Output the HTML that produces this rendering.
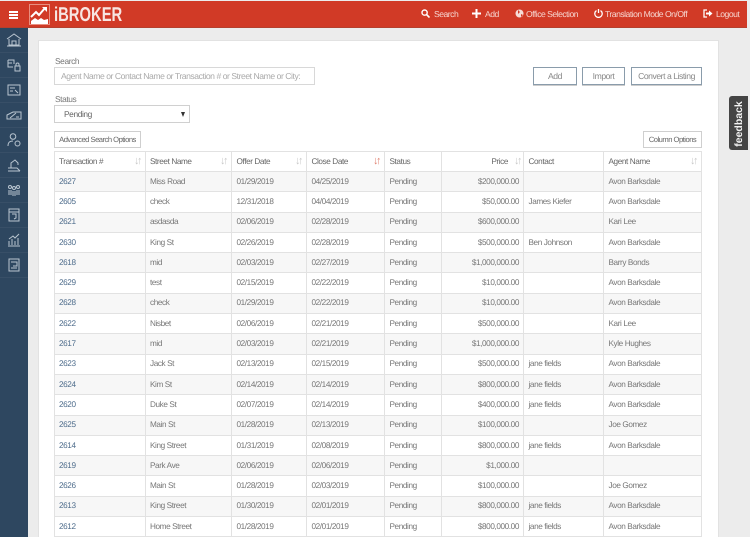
<!DOCTYPE html>
<html><head><meta charset="utf-8"><style>
*{box-sizing:border-box}
html,body{margin:0;padding:0}
body{width:750px;height:537px;overflow:hidden;position:relative;background:#ececec;font-family:"Liberation Sans",sans-serif;font-size:8.4px;letter-spacing:-.4px;color:#777;text-rendering:geometricPrecision}
.a{position:absolute;white-space:nowrap}
#top{left:0;top:1px;width:747px;height:27px;background:#d13a26;border-bottom:1px solid #b5402e}
#side{left:0;top:28px;width:28px;height:509px;background:#2e4760}
#side i{position:absolute;left:0;width:28px;height:1px;background:#384f67}
#side svg{position:absolute;left:6px;width:16px;height:16px;fill:none;stroke:#b9c5d0;stroke-width:1}
#card{left:38px;top:40px;width:681px;height:497px;background:#fff;border:1px solid #e2e2e2;border-bottom:0}
.nav{color:#f6d5cf;font-size:8.6px;letter-spacing:-.5px;top:9px}
.btn{border:1px solid #8a9cab;background:#fff;color:#888;text-align:center;height:18px;line-height:16px;font-size:8.6px;letter-spacing:-.45px;box-shadow:0 1px 0 #ccc}
.btn2{border:1px solid #cfcfcf;background:#fff;color:#666;text-align:center;height:17px;line-height:15px;font-size:7.6px;letter-spacing:-.5px}
table{position:absolute;left:54px;top:151px;width:647px;border-collapse:collapse;table-layout:fixed;font-size:8.2px;letter-spacing:-.4px;background:#fff}
td,th{border:1px solid #e2e2e2;padding:0 4px 1px;height:20.3px;font-weight:normal;text-align:left;color:#777;white-space:nowrap;overflow:hidden;position:relative}
td:nth-child(n+3),th:nth-child(n+3){padding-left:4.5px}
th{height:20px;color:#666;font-size:8.2px}
tr:nth-child(odd) td{background:#f7f7f7}
td:first-child{color:#4f6d8c}
.r{text-align:right}
.s{position:absolute;right:5px;top:3px;font-size:11px;color:#c8c8c8;letter-spacing:-2.5px}
</style></head><body>
<div class="a" id="top"></div>
<div class="a" style="left:9px;top:11px;width:9px;height:2px;background:#fff"></div>
<div class="a" style="left:9px;top:14px;width:9px;height:2px;background:#fff"></div>
<div class="a" style="left:9px;top:17px;width:9px;height:2px;background:#fff"></div>
<svg class="a" style="left:29px;top:4px" width="21" height="21" viewBox="0 0 21 21"><rect x=".5" y=".5" width="20" height="20" fill="none" stroke="#e88f80"/><path d="M2 13L7 8l3 3 6-7" fill="none" stroke="#fff" stroke-width="2"/><path d="M13 3h5v5z" fill="#fff"/><path d="M2 20v-3l4-3 3 2 3-2 3 2 4-1v5z" fill="#fff"/></svg>
<div class="a" style="left:54px;top:5px;font-size:20px;line-height:20px;letter-spacing:0;font-weight:bold;color:#f7e6e2;transform:scaleX(.74);transform-origin:0 0">iBROKER</div>

<svg class="a" style="left:421px;top:9px" width="9" height="9" viewBox="0 0 9 9"><circle cx="3.6" cy="3.6" r="2.6" fill="none" stroke="#fff" stroke-width="1.4"/><path d="M5.500 5.500L8.500 8.500" stroke="#fff" stroke-width="1.600"/></svg>
<div class="a nav" style="left:434px">Search</div>
<svg class="a" style="left:472px;top:9px" width="9" height="9" viewBox="0 0 9 9"><path d="M4.500 0v9M0 4.500h9" stroke="#fff" stroke-width="2"/></svg>
<div class="a nav" style="left:485px">Add</div>
<svg class="a" style="left:515px;top:9px" width="9" height="9" viewBox="0 0 9 9"><circle cx="4.500" cy="4.500" r="4" fill="#f6dcd7"/><path d="M3 1l2 2-2 2zM6 5l2 1-2 2z" fill="#d13a26"/></svg>
<div class="a nav" style="left:526px">Office Selection</div>
<svg class="a" style="left:594px;top:9px" width="9" height="9" viewBox="0 0 9 9"><path d="M2.500 1.600a3.700 3.700 0 1 0 4 0M4.500 0v4" fill="none" stroke="#fff" stroke-width="1.300"/></svg>
<div class="a nav" style="left:605px">Translation Mode On/Off</div>
<svg class="a" style="left:703px;top:9px" width="10" height="9" viewBox="0 0 10 9"><path d="M4 1H1v7h3" fill="none" stroke="#fff" stroke-width="1.300"/><path d="M3 3.500h3V1.500l3.500 3-3.500 3V5.500H3z" fill="#fff"/></svg>
<div class="a nav" style="left:716px">Logout</div>

<div class="a" id="side">
<i style="top:24px"></i><i style="top:49px"></i><i style="top:74px"></i><i style="top:99px"></i><i style="top:124px"></i><i style="top:149px"></i><i style="top:174px"></i><i style="top:199px"></i><i style="top:224px"></i><i style="top:249px"></i>
<svg style="top:4px" viewBox="0 0 16 16"><path d="M1 7l7-5 7 5M3 7v6h10V7M1 14h14M6 13V9h4v4"/></svg>
<svg style="top:29px" viewBox="0 0 16 16"><path d="M2 3h6v4M2 3v7h5M2 6h4"/><rect x="9" y="9" width="5" height="5"/><path d="M10 9V7.500a1.500 1.500 0 0 1 3 0V9"/></svg>
<svg style="top:54px" viewBox="0 0 16 16"><rect x="2" y="3" width="12" height="10"/><path d="M4 6h5M4 9h3M9 8l3 3"/></svg>
<svg style="top:79px" viewBox="0 0 16 16"><path d="M1 8l6-3 8 0v7H1zM4 11l6-5M10 10h3"/></svg>
<svg style="top:104px" viewBox="0 0 16 16"><circle cx="7" cy="4.500" r="2.800"/><path d="M2 14c0-4 2-5 5-5"/><circle cx="11.500" cy="11.500" r="2.500"/></svg>
<svg style="top:129px" viewBox="0 0 16 16"><path d="M2 14h12M2 11h9l3 3M5 11V6l4-3 3 3v2"/></svg>
<svg style="top:154px" viewBox="0 0 16 16"><circle cx="4" cy="5" r="1.500"/><circle cx="12" cy="5" r="1.500"/><circle cx="8" cy="6" r="1.500"/><path d="M3 8v5M5 8v5M7 9v5M9 9v5M11 8v5M13 8v5"/></svg>
<svg style="top:179px" viewBox="0 0 16 16"><rect x="3" y="2" width="10" height="12"/><path d="M3 5h10M6 7h4v4l-2 1"/></svg>
<svg style="top:204px" viewBox="0 0 16 16"><path d="M2 14h12M3 13V9M6 13V7M9 13V9M12 13V6M3 7l4-3 2 2 4-4"/></svg>
<svg style="top:229px" viewBox="0 0 16 16"><rect x="3" y="2" width="10" height="12"/><path d="M5 5h6v4H7M5 11h6"/></svg>
</div>

<div class="a" id="card"></div>
<div class="a" style="left:55px;top:56px">Search</div>
<div class="a" style="left:54px;top:67px;width:261px;height:18px;border:1px solid #d8d8d8;background:#fff;padding-left:6px;line-height:16px;font-size:8.6px;letter-spacing:-.45px;color:#aaa">Agent Name or Contact Name or Transaction # or Street Name or City:</div>
<div class="a" style="left:55px;top:94px">Status</div>
<div class="a" style="left:54px;top:105px;width:136px;height:18px;border:1px solid #d0d0d0;background:#fff;padding-left:9px;line-height:16px;color:#666">Pending</div>
<div class="a" style="left:181px;top:112px;width:0;height:0;border-left:2.500px solid transparent;border-right:2.500px solid transparent;border-top:5px solid #333"></div>
<div class="a btn" style="left:533px;top:67px;width:44px">Add</div>
<div class="a btn" style="left:582px;top:67px;width:43px">Import</div>
<div class="a btn" style="left:631px;top:67px;width:71px">Convert a Listing</div>
<div class="a btn2" style="left:54px;top:131px;width:87px">Advanced Search Options</div>
<div class="a btn2" style="left:643px;top:131px;width:59px">Column Options</div>

<table>
<colgroup><col style="width:91px"><col style="width:86px"><col style="width:75px"><col style="width:78px"><col style="width:57px"><col style="width:82px"><col style="width:80px"><col style="width:98px"></colgroup>
<thead><tr>
<th>Transaction #<span class="s">↓↑</span></th>
<th>Street Name<span class="s">↓↑</span></th>
<th>Offer Date<span class="s">↓↑</span></th>
<th>Close Date<span class="s" style="color:#e0806f">↓↑</span></th>
<th>Status</th>
<th class="r" style="padding-right:15px">Price<span class="s" style="right:3px">↓↑</span></th>
<th>Contact</th>
<th>Agent Name<span class="s">↓↑</span></th>
</tr></thead>
<tbody>
<tr><td>2627</td><td>Miss Road</td><td>01/29/2019</td><td>04/25/2019</td><td>Pending</td><td class="r">$200,000.00</td><td></td><td>Avon Barksdale</td></tr>
<tr><td>2605</td><td>check</td><td>12/31/2018</td><td>04/04/2019</td><td>Pending</td><td class="r">$50,000.00</td><td>James Kiefer</td><td>Avon Barksdale</td></tr>
<tr><td>2621</td><td>asdasda</td><td>02/06/2019</td><td>02/28/2019</td><td>Pending</td><td class="r">$600,000.00</td><td></td><td>Kari Lee</td></tr>
<tr><td>2630</td><td>King St</td><td>02/26/2019</td><td>02/28/2019</td><td>Pending</td><td class="r">$500,000.00</td><td>Ben Johnson</td><td>Avon Barksdale</td></tr>
<tr><td>2618</td><td>mid</td><td>02/03/2019</td><td>02/27/2019</td><td>Pending</td><td class="r">$1,000,000.00</td><td></td><td>Barry Bonds</td></tr>
<tr><td>2629</td><td>test</td><td>02/15/2019</td><td>02/22/2019</td><td>Pending</td><td class="r">$10,000.00</td><td></td><td>Avon Barksdale</td></tr>
<tr><td>2628</td><td>check</td><td>01/29/2019</td><td>02/22/2019</td><td>Pending</td><td class="r">$10,000.00</td><td></td><td>Avon Barksdale</td></tr>
<tr><td>2622</td><td>Nisbet</td><td>02/06/2019</td><td>02/21/2019</td><td>Pending</td><td class="r">$500,000.00</td><td></td><td>Kari Lee</td></tr>
<tr><td>2617</td><td>mid</td><td>02/03/2019</td><td>02/21/2019</td><td>Pending</td><td class="r">$1,000,000.00</td><td></td><td>Kyle Hughes</td></tr>
<tr><td>2623</td><td>Jack St</td><td>02/13/2019</td><td>02/15/2019</td><td>Pending</td><td class="r">$500,000.00</td><td>jane fields</td><td>Avon Barksdale</td></tr>
<tr><td>2624</td><td>Kim St</td><td>02/14/2019</td><td>02/14/2019</td><td>Pending</td><td class="r">$800,000.00</td><td>jane fields</td><td>Avon Barksdale</td></tr>
<tr><td>2620</td><td>Duke St</td><td>02/07/2019</td><td>02/14/2019</td><td>Pending</td><td class="r">$400,000.00</td><td>jane fields</td><td>Avon Barksdale</td></tr>
<tr><td>2625</td><td>Main St</td><td>01/28/2019</td><td>02/13/2019</td><td>Pending</td><td class="r">$100,000.00</td><td></td><td>Joe Gomez</td></tr>
<tr><td>2614</td><td>King Street</td><td>01/31/2019</td><td>02/08/2019</td><td>Pending</td><td class="r">$800,000.00</td><td>jane fields</td><td>Avon Barksdale</td></tr>
<tr><td>2619</td><td>Park Ave</td><td>02/06/2019</td><td>02/06/2019</td><td>Pending</td><td class="r">$1,000.00</td><td></td><td></td></tr>
<tr><td>2626</td><td>Main St</td><td>01/28/2019</td><td>02/03/2019</td><td>Pending</td><td class="r">$100,000.00</td><td></td><td>Joe Gomez</td></tr>
<tr><td>2613</td><td>King Street</td><td>01/30/2019</td><td>02/01/2019</td><td>Pending</td><td class="r">$800,000.00</td><td>jane fields</td><td>Avon Barksdale</td></tr>
<tr><td>2612</td><td>Home Street</td><td>01/28/2019</td><td>02/01/2019</td><td>Pending</td><td class="r">$800,000.00</td><td>jane fields</td><td>Avon Barksdale</td></tr>
</tbody></table>

<div class="a" style="left:729px;top:96px;width:19px;height:54px;background:#444;border-radius:3px 0 0 3px"></div>
<div class="a" style="left:739px;top:124px;color:#f2f2f2;font-size:10.5px;letter-spacing:0;font-weight:bold;transform:translate(-50%,-50%) rotate(-90deg)">feedback</div>
</body></html>
